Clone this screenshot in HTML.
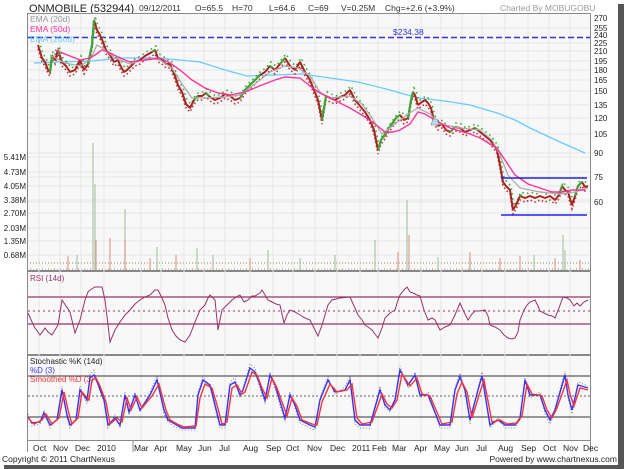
<!DOCTYPE html>
<html><head><meta charset="utf-8">
<style>
html,body{margin:0;padding:0;background:#fff;}
body{width:624px;height:469px;overflow:hidden;position:relative;font-family:"Liberation Sans",sans-serif;}
svg{position:absolute;left:0;top:0;}
</style></head><body>
<svg width="624" height="469" viewBox="0 0 624 469" xmlns="http://www.w3.org/2000/svg" font-family="Liberation Sans, sans-serif">
<defs>
<polyline id="px" fill="none" points="38,45 42,58 45,62 48,70 50,72 52,55 55,60 58,50 62,62 66,66 70,72 75,70 80,60 84,70 88,64 92,45 94,20 97,30 100,35 103,42 106,50 110,55 114,62 118,60 120,65 124,72 127,70 131,66 135,62 140,60 145,56 152,52 155,50 158,58 162,60 166,64 170,64 175,76 178,85 182,92 186,104 190,108 194,100 198,96 202,96 206,93 210,97 215,100 220,98 225,94 230,96 235,100 240,98 245,90 250,85 255,80 260,75 265,72 270,66 275,70 280,64 285,58 290,66 295,70 300,62 305,72 310,80 314,90 318,100 322,120 324,108 326,96 330,98 335,100 340,97 345,95 350,90 355,100 360,106 365,112 370,120 374,130 376,140 378,150 381,140 385,135 389,128 392,124 396,118 400,115 404,120 408,118 411,100 413,92 415,95 418,105 422,102 425,100 428,103 431,108 434,120 438,126 442,124 446,130 450,132 455,127 460,128 465,132 470,130 475,128 480,132 485,136 490,140 494,145 497,150 500,165 503,182 506,186 510,190 513,210 516,205 520,196 525,198 530,196 535,198 540,196 545,198 550,196 555,200 559,195 562,186 565,190 568,192 572,205 575,196 578,186 582,182 585,187 588,186"/>
<pattern id="vb" width="6" height="8" patternUnits="userSpaceOnUse"><rect x="0" y="4" width="1" height="4" fill="#e0b0a0"/><rect x="3" y="5" width="1" height="3" fill="#b8c8b0"/></pattern>
</defs>
<rect x="618" y="4" width="6" height="465" fill="#555"/>
<rect x="4" y="465" width="620" height="4" fill="#555"/>
<rect x="0" y="0" width="618" height="465" fill="#fff"/>
<text x="29" y="12" font-size="11" fill="#222">ONMOBILE (532944)</text>
<g font-size="8.5" fill="#333">
<text x="139" y="11">09/12/2011</text>
<text x="195" y="11">O=65.5</text>
<text x="232" y="11">H=70</text>
<text x="269" y="11">L=64.6</text>
<text x="308" y="11">C=69</text>
<text x="341" y="11">V=0.25M</text>
<text x="385" y="11">Chg=+2.6 (+3.9%)</text>
</g>
<text x="500" y="11" font-size="8.5" fill="#999">Charted By MOBUGOBU</text>
<rect x="27.5" y="13.5" width="563" height="257" fill="#f8f8f8" stroke="#888"/>
<rect x="27.5" y="271.5" width="563" height="83" fill="#f8f8f8" stroke="#888"/>
<rect x="27.5" y="355.5" width="563" height="85" fill="#f8f8f8" stroke="#888"/>
<g stroke="#e6e6e6" stroke-width="1">
<path d="M39 14V440M60 14V440M81 14V440M104 14V440M141 14V440M161 14V440M184 14V440M204 14V440M225 14V440M250 14V440M273 14V440M293 14V440M315 14V440M337 14V440M360 14V440M378 14V440M399 14V440M421 14V440M441 14V440M462 14V440M482 14V440M505 14V440M528 14V440M549 14V440M570 14V440"/>
<path d="M28 28H590M28 43H590M28 51H590M28 61H590M28 70H590M28 80H590M28 91H590M28 105H590M28 118H590M28 134H590M28 153H590M28 177H590M28 202H590M28 157H590M28 172H590M28 186H590M28 200H590M28 213H590M28 228H590M28 241H590M28 255H590"/>
</g>
<g font-size="8" fill="#222">
<text x="594" y="21">270</text><text x="594" y="31">255</text><text x="594" y="38">240</text>
<text x="594" y="46">225</text><text x="594" y="54">210</text><text x="594" y="64">195</text>
<text x="594" y="73">180</text><text x="594" y="83">165</text><text x="594" y="94">150</text>
<text x="594" y="108">135</text><text x="594" y="121">120</text><text x="594" y="137">105</text>
<text x="594" y="156">90</text><text x="594" y="180">75</text><text x="594" y="205">60</text>
</g>
<g font-size="8" fill="#222" text-anchor="end">
<text x="26" y="160">5.41M</text><text x="26" y="175">4.73M</text><text x="26" y="189">4.05M</text>
<text x="26" y="203">3.38M</text><text x="26" y="216">2.70M</text><text x="26" y="231">2.03M</text>
<text x="26" y="244">1.35M</text><text x="26" y="258">0.68M</text>
</g>
<rect x="28" y="262" width="562" height="8" fill="url(#vb)"/>
<g stroke="#b0c4a8" stroke-width="1.2">
<path d="M93 270V143M95 270V184M125 270V209M157 270V247M197 270V248M213 270V255M268 270V250M375 270V240M407 270V200M563 270V235M565 270V250M534 270V255M470 270V258M438 270V257M300 270V258M335 270V255M77 270V255"/>
</g>
<g stroke="#dca090" stroke-width="1.2">
<path d="M96 270V240M110 270V238M125 270V240M68 270V256M150 270V258M176 270V255M250 270V258M398 270V252M409 270V235M470 270V252M500 270V258M520 270V256M555 270V258M580 270V260"/>
</g>
<line x1="28" y1="37.5" x2="590" y2="37.5" stroke="#3333dd" stroke-width="1.4" stroke-dasharray="6,3"/>
<text x="393" y="35" font-size="8.5" fill="#3333dd">$234.38</text>
<polyline fill="none" stroke="#66ccff" stroke-width="1.3" points="34,63 60,62 92,61 120,58 159,58 200,62 225,70 247,76 275,75 302,74 330,78 358,82 390,90 418,98 445,101 470,105 497,113 515,120 530,128 545,135 560,142 585,153"/>
<use href="#px" transform="translate(0,4)" stroke="#b33" stroke-width="1.6" stroke-dasharray="1.5,2.5"/>
<use href="#px" transform="translate(1,-4)" stroke="#3a3" stroke-width="1.6" stroke-dasharray="1.5,3.5"/>
<use href="#px" stroke="#aa2222" stroke-width="2" stroke-linejoin="bevel"/>
<g stroke="#33aa33" stroke-width="2" fill="none">
<path d="M50 72L52 55M58 50L60 55M88 64L92 45L94 20M152 52L155 50M194 100L198 96M206 93L209 96M240 98L245 90L250 85L255 80L260 75M270 66L272 68M280 64L285 58M322 120L326 96M378 150L381 140L389 128L396 118L400 115M408 118L411 100L413 92M450 132L455 127M475 128L478 130M520 196L522 195M559 195L562 186M575 196L578 186L582 182"/>
</g>
<polyline fill="none" stroke="#aaaaaa" stroke-width="1.2" points="50,55 65,63 80,66 90,60 97,45 105,50 115,58 130,64 150,58 160,60 172,68 182,84 192,98 205,98 225,97 240,95 255,84 270,72 285,66 298,68 310,76 320,92 330,98 350,96 362,104 372,118 382,134 395,124 408,114 418,108 430,114 440,124 460,128 480,130 492,140 500,155 508,175 520,188 540,192 560,194 575,192 588,188"/>
<polyline fill="none" stroke="#ff3399" stroke-width="1.4" points="55,50 70,56 80,60 90,58 95,55 102,50 108,52 120,58 130,62 145,60 160,58 170,63 180,70 192,80 205,88 218,93 230,95 245,92 262,85 275,80 285,77 300,78 310,86 320,93 330,98 350,108 365,117 375,124 385,132 393,132 400,130 410,124 418,112 425,114 435,120 450,128 470,134 480,138 490,144 497,148 505,160 515,175 528,184 540,188 552,192 562,192 572,190 585,190"/>
<path d="M433 119L437 119L439 125L431 125Z" fill="#bcd8e8" stroke="#7090a0" stroke-width="0.6"/>
<line x1="501" y1="178" x2="587" y2="178" stroke="#2222ee" stroke-width="1.6"/>
<line x1="501" y1="215" x2="587" y2="215" stroke="#2222ee" stroke-width="1.6"/>
<text x="30" y="22" font-size="8.5" fill="#999">EMA (20d)</text>
<text x="30" y="32" font-size="8.5" fill="#ff3399">EMA (50d)</text>
<text x="30" y="42" font-size="8.5" fill="#66ccff">EMA (200d)</text>
<text x="30" y="281" font-size="8" fill="#993366">RSI (14d)</text>
<line x1="28" y1="297" x2="590" y2="297" stroke="#993366" stroke-width="1.3"/>
<line x1="28" y1="324" x2="590" y2="324" stroke="#993366" stroke-width="1.3"/>
<line x1="28" y1="311" x2="590" y2="311" stroke="#993366" stroke-width="1" stroke-dasharray="2,3"/>
<polyline fill="none" stroke="#993366" stroke-width="1" points="28,313 32,322 35,328 40,335 45,328 48,332 52,335 55,330 58,325 62,300 66,306 70,312 75,333 80,320 85,300 88,292 90,290 95,287 102,287 105,300 108,325 110,342 115,330 120,322 125,315 130,310 135,304 140,300 145,297 150,295 155,290 158,290 162,298 165,305 168,318 172,330 176,336 180,340 185,342 190,335 195,322 200,310 205,305 208,298 210,295 215,300 218,330 222,310 227,305 232,300 236,297 240,295 244,302 248,300 252,296 255,296 260,293 262,290 268,300 272,302 276,304 280,305 284,323 287,315 290,310 295,312 300,315 305,318 310,320 314,328 318,336 322,325 325,315 328,305 332,300 340,298 350,297 354,306 358,315 362,320 365,325 368,327 372,330 375,334 378,338 382,328 385,318 390,313 395,310 398,300 400,295 404,290 407,287 410,292 413,293 417,295 420,296 424,310 428,320 432,318 435,320 438,326 440,330 445,327 450,325 455,315 460,303 464,312 468,320 472,314 475,311 480,311 485,310 488,316 490,325 495,327 500,330 504,335 508,338 512,339 515,338 518,332 520,320 524,310 527,305 530,302 535,300 538,306 540,311 544,313 548,315 552,316 555,318 559,308 563,297 567,298 570,300 574,306 577,303 580,306 584,302 588,300"/>
<text x="30" y="364" font-size="8" fill="#222">Stochastic %K (14d)</text>
<text x="30" y="373" font-size="8" fill="#3333ff">%D (3)</text>
<text x="30" y="382" font-size="8" fill="#ff3333">Smoothed %D (3)</text>
<line x1="28" y1="376" x2="590" y2="376" stroke="#333" stroke-width="1"/>
<line x1="28" y1="417" x2="590" y2="417" stroke="#333" stroke-width="1"/>
<line x1="28" y1="396" x2="590" y2="396" stroke="#333" stroke-width="0.8" stroke-dasharray="2,2"/>
<polyline fill="none" stroke="#666" stroke-width="0.8" stroke-dasharray="1,2" points="28,414 32,426 40,424 44,410 50,428 57,418 62,386 67,418 70,428 76,418 80,386 87,404 90,374 94,370 98,386 104,402 108,428 115,415 120,428 125,392 129,415 135,392 140,412 150,392 157,376 164,414 168,422 175,427 182,430 195,430 198,392 203,377 210,387 215,408 220,428 225,428 230,382 235,378 240,398 243,388 250,364 255,368 260,388 265,404 270,372 275,388 285,422 290,392 295,408 300,423 310,428 315,430 320,397 328,377 335,395 345,387 350,376 355,424 360,428 370,428 380,386 385,408 390,412 395,398 400,366 408,388 415,372 420,398 428,392 440,428 450,428 455,388 460,373 465,392 470,424 478,388 482,372 490,428 498,418 505,428 515,428 520,420 525,376 530,398 540,392 545,414 550,424 555,408 565,371 568,398 572,414 578,382 588,386"/>
<polyline fill="none" stroke="#3333ff" stroke-width="1.4" points="28,417 32,423 40,422 44,413 50,425 57,420 62,390 67,415 70,425 76,420 80,390 87,400 90,378 94,375 98,384 104,400 108,425 115,418 120,425 125,395 129,412 135,395 140,410 150,395 157,380 164,410 168,420 175,424 182,428 195,428 198,395 203,380 210,385 215,405 220,425 225,425 230,385 235,382 240,395 243,390 250,368 255,372 260,385 265,400 270,375 275,385 285,418 290,395 295,405 300,420 310,425 315,427 320,400 328,380 335,392 345,390 350,380 355,420 360,425 370,425 380,390 385,405 390,410 395,400 400,370 408,385 415,375 420,395 428,395 440,425 450,425 455,390 460,377 465,390 470,420 478,390 482,376 490,425 498,420 505,425 515,425 520,418 525,380 530,395 540,395 545,410 550,420 555,410 565,375 568,395 572,410 578,385 588,388"/>
<polyline fill="none" stroke="#ff3333" stroke-width="1.4" points="28,418 34,424 42,420 46,414 52,424 59,418 64,392 69,414 72,424 78,418 82,392 89,400 92,380 96,378 100,386 106,402 110,424 117,418 122,422 127,398 131,410 137,397 142,408 152,396 159,384 166,410 170,420 177,424 184,427 196,426 200,398 205,384 212,388 217,405 222,424 227,422 232,388 237,385 242,394 245,392 252,372 257,375 262,388 267,398 272,378 277,388 287,416 292,398 297,406 302,420 312,424 317,425 322,402 330,384 337,392 347,390 352,384 357,418 362,424 372,422 382,394 387,404 392,408 397,400 402,374 410,386 417,378 422,394 430,396 442,424 452,422 457,394 462,382 467,392 472,418 480,392 484,380 492,422 500,420 507,424 517,423 522,416 527,384 532,394 542,396 547,410 552,418 557,408 567,380 570,394 574,406 580,388 588,390"/>
<g stroke="#888" stroke-width="1"><path d="M27.5 441V452M133 441V452M590.5 441V452"/></g>
<g font-size="8.5" fill="#222">
<text x="33" y="451">Oct</text><text x="53" y="451">Nov</text><text x="75" y="451">Dec</text>
<text x="97" y="451">2010</text><text x="134" y="451">Mar</text><text x="154" y="451">Apr</text>
<text x="176" y="451">May</text><text x="198" y="451">Jun</text><text x="219" y="451">Jul</text>
<text x="243" y="451">Aug</text><text x="266" y="451">Sep</text><text x="286" y="451">Oct</text>
<text x="307" y="451">Nov</text><text x="330" y="451">Dec</text><text x="352" y="451">2011</text>
<text x="372" y="451">Feb</text><text x="392" y="451">Mar</text><text x="414" y="451">Apr</text>
<text x="434" y="451">May</text><text x="455" y="451">Jun</text><text x="476" y="451">Jul</text>
<text x="498" y="451">Aug</text><text x="521" y="451">Sep</text><text x="543" y="451">Oct</text>
<text x="563" y="451">Nov</text><text x="583" y="451">Dec</text>
</g>
<text x="2" y="462" font-size="8.5" fill="#222">Copyright © 2011 ChartNexus</text>
<text x="617" y="462" font-size="8.5" fill="#222" text-anchor="end">Powered by www.chartnexus.com</text>
</svg>
</body></html>
